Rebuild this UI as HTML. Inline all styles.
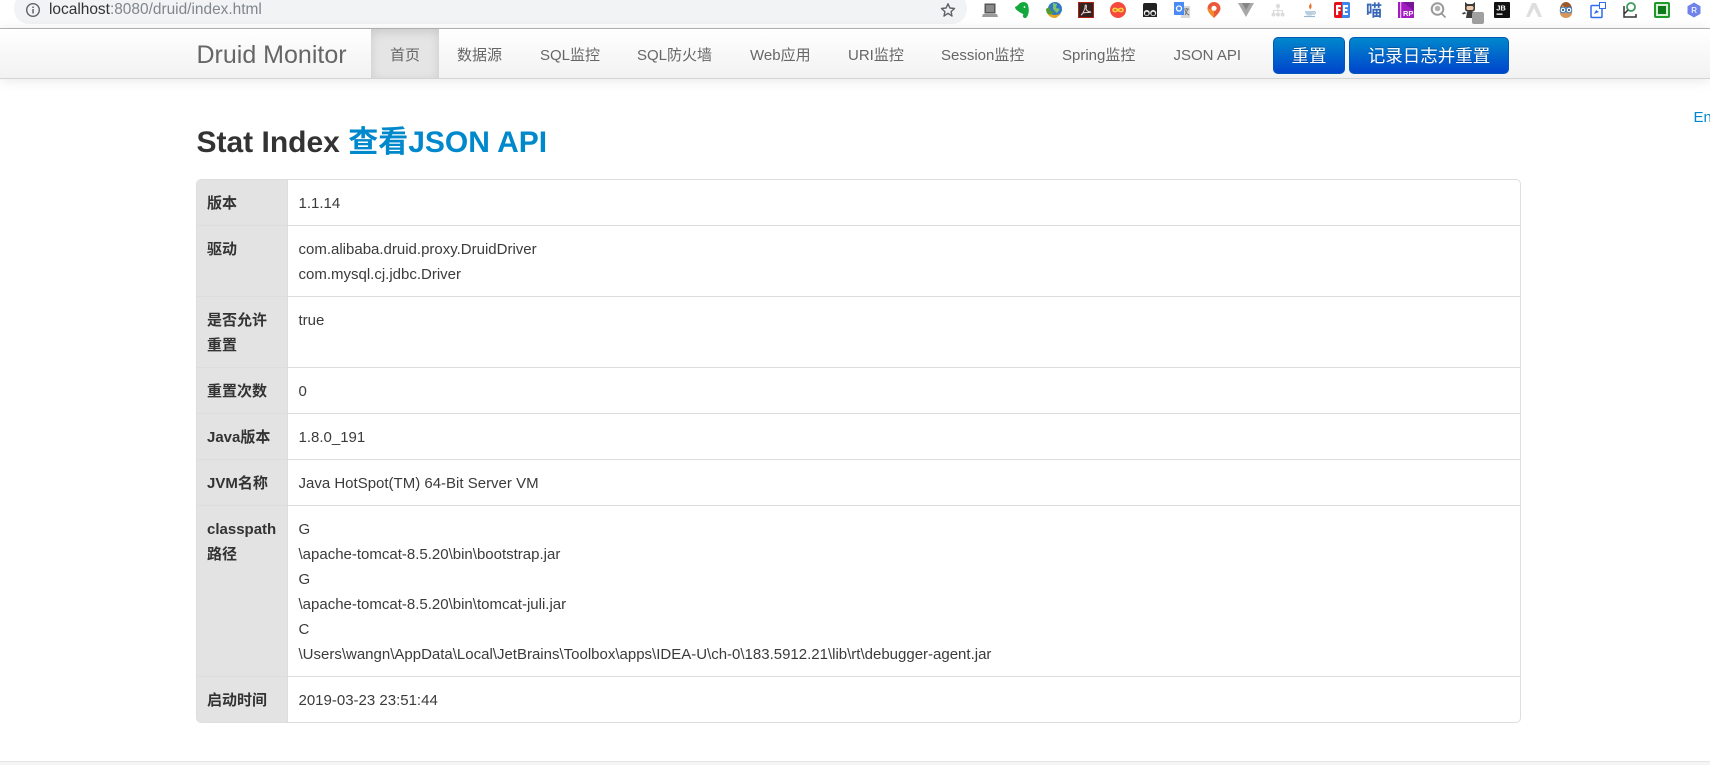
<!DOCTYPE html>
<html lang="zh">
<head>
<meta charset="utf-8">
<title>Druid Stat Index</title>
<style>
*{box-sizing:border-box}
html,body{margin:0;padding:0;width:1710px;height:765px;overflow:hidden;background:#fff}
body{position:relative;font-family:"Liberation Sans","Noto Sans CJK SC",sans-serif;font-size:15px;color:#333}
.a{position:absolute;white-space:nowrap}
#omni{position:absolute;left:14px;top:-7px;width:953px;height:31px;background:#f1f3f4;border-radius:15px}
#sep{position:absolute;left:0;top:28px;width:1710px;height:1px;background:#b6b6b6}
#nav{position:absolute;left:0;top:29px;width:1710px;height:50px;background:linear-gradient(#fff,#f2f2f2);border-bottom:1px solid #d4d4d4;box-shadow:0 1px 12px rgba(0,0,0,.1)}
#act{position:absolute;left:371px;top:29px;width:68px;height:49px;background:#e5e5e5;box-shadow:inset 0 3px 10px rgba(0,0,0,.125)}
.n{position:absolute;top:43px;line-height:25px;color:#666;white-space:nowrap}
.btn{position:absolute;top:37px;height:37px;border-radius:5px;border:1px solid #0058b8;background:linear-gradient(#0088cc,#0044cc);color:#fff;font-size:17.5px;line-height:36px;text-align:center;text-shadow:0 -1px 0 rgba(0,0,0,.25)}
#tbl{position:absolute;left:196px;top:179px;width:1325px;height:544px;border:1px solid #dedede;border-radius:5px;overflow:hidden}
.th{position:absolute;left:0;width:91px;background:#e3e3e3;border-right:1px solid #ddd;border-bottom:1px solid #ddd;font-weight:bold;padding:11px 0 0 10px;line-height:25px;white-space:nowrap}
.td{position:absolute;left:91px;right:0;border-bottom:1px solid #ddd;padding:11px 0 0 10.500px;line-height:25px;white-space:nowrap;color:#3b3b3b}
.ic{position:absolute;top:2px;width:16px;height:16px;overflow:visible}
#foot{position:absolute;left:0;top:761px;width:1710px;height:4px;background:#f5f5f5;border-top:1px solid #e5e5e5}
</style>
</head>
<body>
<div id="omni"></div>
<svg class="ic" style="left:25px;top:2px" viewBox="0 0 16 16"><circle cx="8" cy="8" r="6.3" fill="none" stroke="#5f6368" stroke-width="1.4"/><rect x="7.3" y="7" width="1.5" height="4.5" fill="#5f6368"/><rect x="7.3" y="4.5" width="1.5" height="1.5" fill="#5f6368"/></svg>
<div class="a" style="left:49px;top:0;line-height:20px;font-size:15.45px;color:#80868b"><span style="color:#333">localhost</span>:8080/druid/index.html</div>
<svg class="ic" style="left:940px" viewBox="0 0 16 16"><path d="M8 1.8l1.9 4.2 4.6.5-3.4 3.1.9 4.5L8 11.3l-4 2.8.9-4.5L1.5 6.5l4.6-.5z" fill="none" stroke="#5f6368" stroke-width="1.4" stroke-linejoin="round"/></svg>

<!-- extensions -->
<svg class="ic" style="left:982px" viewBox="0 0 16 16"><rect x="2.5" y="1.5" width="11" height="10" fill="#555"/><rect x="4" y="3" width="8" height="7" fill="#8a8a8a"/><path d="M1 12h14l1 3H0z" fill="#9a9a9a"/></svg>
<svg class="ic" style="left:1014px" viewBox="0 0 16 16"><path d="M3 4L6 1C9-.5 13 0 14 3c1.500 5 1 10-2 13-3 .5-4-2-2.500-3.500C8 11 6 11 4 9 2 8 1 6 1 5z" fill="#14a83c"/><circle cx="10.500" cy="5" r=".9" fill="#fff"/></svg>
<svg class="ic" style="left:1046px" viewBox="0 0 16 16"><circle cx="9" cy="7" r="7" fill="#2f78c8"/><path d="M7 1l4 1-1 4 4 1-3 4-4-4z" fill="#7fc06a"/><path d="M0 7c0 4 3 8 8 9l-2-5 4-1-5-1-2-4z" fill="#4f9e2f"/><path d="M2 12c2 3 5 4 8 4l5-4-6 1c-3 0-5-1-7-1z" fill="#e9a321"/></svg>
<svg class="ic" style="left:1078px" viewBox="0 0 16 16"><rect x=".5" y=".5" width="15" height="15" fill="#322"/><rect x=".5" y=".5" width="15" height="15" fill="none" stroke="#b3200f"/><path d="M3 13c2-1 3-4 4-7 0-2 0-3 .8-3s.7 2 .2 4c1 2 3 3 5 3-2 1-5 0-8 1-1 1-1.500 2-2 2z" fill="none" stroke="#e8d8d0" stroke-width="1"/></svg>
<svg class="ic" style="left:1110px" viewBox="0 0 16 16"><circle cx="8" cy="8" r="8" fill="#f5483e"/><path d="M8 8C6.500 5.800 3 5.800 3 8s3.500 2.200 5 0c1.500-2.200 5-2.200 5 0s-3.500 2.200-5 0z" fill="none" stroke="#f8d53a" stroke-width="1.500"/></svg>
<svg class="ic" style="left:1142px" viewBox="0 0 16 16"><path d="M3 1h10a2 2 0 0 1 2 2v12H1V3a2 2 0 0 1 2-2z" fill="#222"/><circle cx="4.800" cy="11" r="3" fill="#f2f2f2"/><circle cx="11.200" cy="11" r="3" fill="#f2f2f2"/><circle cx="4.800" cy="11.500" r="1.800" fill="#222"/><circle cx="11.200" cy="11.500" r="1.800" fill="#222"/></svg>
<svg class="ic" style="left:1174px" viewBox="0 0 16 16"><rect x="7" y="4" width="9" height="12" fill="#d8d8d8"/><path d="M10 7h5M12.500 6v1M11 13l3-6M11 8c.5 2 2 4 4 5" stroke="#777" stroke-width="1" fill="none"/><rect x="0" y="0" width="10" height="13" fill="#4a8af4"/><circle cx="5" cy="6.500" r="2.500" fill="none" stroke="#fff" stroke-width="1.300"/></svg>
<svg class="ic" style="left:1206px" viewBox="0 0 16 16"><path d="M8 0a6.500 6.500 0 0 1 6.500 6.500C14.500 10 10 14 8 16 6 14 1.500 10 1.500 6.500A6.500 6.500 0 0 1 8 0z" fill="#ea5a3a"/><path d="M8 16C6 14 1.500 10 1.500 6.500L8 8z" fill="#f28a2a"/><circle cx="8" cy="6.300" r="2.600" fill="#fff"/></svg>
<svg class="ic" style="left:1238px" viewBox="0 0 16 16"><path d="M0 1h16L8 15z" fill="#a8a8a8"/><path d="M4 1h8L8 8z" fill="#7a7a7a" opacity=".75"/></svg>
<svg class="ic" style="left:1270px" viewBox="0 0 16 16"><g fill="#dcdcdc"><circle cx="8" cy="4" r="2.200"/><circle cx="3.500" cy="12.500" r="2"/><circle cx="8" cy="12.500" r="2"/><circle cx="12.500" cy="12.500" r="2"/></g><path d="M8 6v5M3.500 11V8.500h9V11" fill="none" stroke="#dcdcdc"/></svg>
<svg class="ic" style="left:1302px" viewBox="0 0 16 16"><path d="M8.500 0c1 2-2 3-1.500 5 .2 1 1 1.500 1 2.500C10 6 10 4 8.500 0z" fill="#e3742f"/><path d="M3 9h9c0 3-1.500 4-3 4.500H6C4.500 13 3 12 3 9z" fill="#b9cfe0"/><path d="M12 9.500c2 0 2 2.500-.8 2.800" fill="none" stroke="#9db8cc"/><path d="M2 14.500h11" stroke="#9db8cc" stroke-width="1.200"/></svg>
<svg class="ic" style="left:1334px" viewBox="0 0 16 16"><rect width="16" height="16" rx="2" fill="#e8101a"/><path d="M8 0h6a2 2 0 0 1 2 2v12a2 2 0 0 1-2 2H8z" fill="#3b87ee"/><path d="M2 3h5v2.200H4.200V7H6.500v2H4.200v4H2zM9 3h5v2.200h-3V7h2.500v2H11v2h3v2H9z" fill="#fff"/></svg>
<svg class="ic" style="left:1366px" viewBox="0 0 16 16"><text x="0" y="14" font-family="Noto Sans CJK SC" font-weight="bold" font-size="16" fill="#3a68b8">喵</text></svg>
<svg class="ic" style="left:1398px" viewBox="0 0 16 16"><rect width="16" height="16" fill="#a21cc2"/><path d="M5 0h11v9z" fill="#7a139c"/><rect x="2" y="0" width="1.300" height="16" fill="#e2b6ee"/><text x="5" y="14" font-family="Liberation Sans" font-weight="bold" font-size="7.500" fill="#fff">RP</text></svg>
<svg class="ic" style="left:1430px" viewBox="0 0 16 16"><circle cx="7.500" cy="7" r="5.800" fill="none" stroke="#9a9a9a" stroke-width="2"/><circle cx="7.500" cy="6.500" r="2.800" fill="#b0b0b0"/><path d="M11.500 11.500L15.500 15.500" stroke="#888" stroke-width="1.500"/></svg>
<svg class="ic" style="left:1462px" viewBox="0 0 16 16"><path d="M3 0l2.500 2h5L13 0v7c0 2-2 3-5 3S3 9 3 7z" fill="#3c3c3c"/><rect x="4.500" y="4" width="7" height="4" rx="1.500" fill="#f2c9a8"/><path d="M5 10h6l1 6H4z" fill="#3c3c3c"/><path d="M3 10L0 11l1 1.500 3-1z" fill="#3c3c3c"/></svg>
<div class="a" style="left:1472px;top:12px;width:12px;height:12px;background:#a0a0a0;border-radius:2px"></div>
<svg class="ic" style="left:1494px" viewBox="0 0 16 16"><rect width="16" height="16" rx="1" fill="#111"/><text x="2.200" y="8.500" font-family="Liberation Sans" font-weight="bold" font-size="7.500" fill="#fff">JB</text><rect x="2.500" y="11.500" width="6" height="1.300" fill="#fff"/></svg>
<svg class="ic" style="left:1526px" viewBox="0 0 16 16"><path d="M6 1h4l6 14h-3.500L8 6l-4.500 9H0z" fill="#dedede"/></svg>
<svg class="ic" style="left:1558px" viewBox="0 0 16 16"><path d="M2 8C2 3 5 1 8 1s6 2 6 7c1 5-2 8-6 8s-7-3-6-8z" fill="#d9965c"/><path d="M2 7C2 3 5 0 8 0s6 3 6 7C11 6 7 6 4 3 4 5 3 6 2 7z" fill="#9b5a2c"/><circle cx="5" cy="8" r="2.800" fill="#fff" stroke="#2e7fd0"/><circle cx="11" cy="8" r="2.800" fill="#fff" stroke="#2e7fd0"/><circle cx="5" cy="8" r="1" fill="#235"/><circle cx="11" cy="8" r="1" fill="#235"/></svg>
<svg class="ic" style="left:1590px" viewBox="0 0 16 16"><rect x="1" y="3.500" width="11" height="12" rx="1" fill="#fff" stroke="#2f6af0" stroke-width="1.500"/><rect x="9.500" y=".5" width="6" height="6" fill="#fff" stroke="#2f6af0"/><path d="M4 12l2-4 3 2z" fill="#2f6af0"/></svg>
<svg class="ic" style="left:1622px" viewBox="0 0 16 16"><circle cx="9" cy="5" r="4" fill="none" stroke="#3d9a5a" stroke-width="1.800"/><path d="M6 8l-4 4v3h12v-3M2 4v8" fill="none" stroke="#333" stroke-width="1.500"/></svg>
<svg class="ic" style="left:1654px" viewBox="0 0 16 16"><rect width="16" height="16" rx="2" fill="#1d9a2a"/><rect x="2" y="2" width="12" height="12" fill="#d7efd7"/><rect x="4" y="4" width="8" height="8" fill="#0f7a1a"/></svg>
<svg class="ic" style="left:1686px" viewBox="0 0 16 16"><path d="M8 .5l6.500 3.700v7.600L8 15.500l-6.500-3.700V4.200z" fill="#6f83ea"/><text x="5.300" y="11" font-family="Liberation Sans" font-weight="bold" font-size="8" fill="#e8ecff">R</text></svg>
<div id="sep"></div>

<!-- navbar -->
<div id="nav"></div>
<div id="act"></div>
<div class="a" style="left:196.500px;top:40px;font-size:25px;line-height:30px;color:#666">Druid Monitor</div>
<div class="n" style="left:390px">首页</div>
<div class="n" style="left:457px">数据源</div>
<div class="n" style="left:540px">SQL监控</div>
<div class="n" style="left:637px">SQL防火墙</div>
<div class="n" style="left:750px">Web应用</div>
<div class="n" style="left:848px">URI监控</div>
<div class="n" style="left:941px">Session监控</div>
<div class="n" style="left:1062px">Spring监控</div>
<div class="n" style="left:1173.500px">JSON API</div>
<div class="btn" style="left:1273px;width:72px">重置</div>
<div class="btn" style="left:1349px;width:160px">记录日志并重置</div>

<div class="a" style="left:1693.500px;top:105px;line-height:25px;color:#08c">En</div>

<div class="a" style="left:196.500px;top:122.500px;font-size:30px;line-height:40px;font-weight:bold;color:#333">Stat Index <span style="color:#08c">查看JSON API</span></div>

<div id="tbl">
<div class="th" style="top:0;height:46px">版本</div><div class="td" style="top:0;height:46px">1.1.14</div>
<div class="th" style="top:46px;height:71px">驱动</div><div class="td" style="top:46px;height:71px">com.alibaba.druid.proxy.DruidDriver<br>com.mysql.cj.jdbc.Driver</div>
<div class="th" style="top:117px;height:71px">是否允许<br>重置</div><div class="td" style="top:117px;height:71px">true</div>
<div class="th" style="top:188px;height:46px">重置次数</div><div class="td" style="top:188px;height:46px">0</div>
<div class="th" style="top:234px;height:46px">Java版本</div><div class="td" style="top:234px;height:46px">1.8.0_191</div>
<div class="th" style="top:280px;height:46px">JVM名称</div><div class="td" style="top:280px;height:46px">Java HotSpot(TM) 64-Bit Server VM</div>
<div class="th" style="top:326px;height:171px">classpath<br>路径</div><div class="td" style="top:326px;height:171px">G<br>\apache-tomcat-8.5.20\bin\bootstrap.jar<br>G<br>\apache-tomcat-8.5.20\bin\tomcat-juli.jar<br>C<br>\Users\wangn\AppData\Local\JetBrains\Toolbox\apps\IDEA-U\ch-0\183.5912.21\lib\rt\debugger-agent.jar</div>
<div class="th" style="top:497px;height:46px;border-bottom:0">启动时间</div><div class="td" style="top:497px;height:46px;border-bottom:0">2019-03-23 23:51:44</div>
</div>

<div id="foot"></div>
</body>
</html>
